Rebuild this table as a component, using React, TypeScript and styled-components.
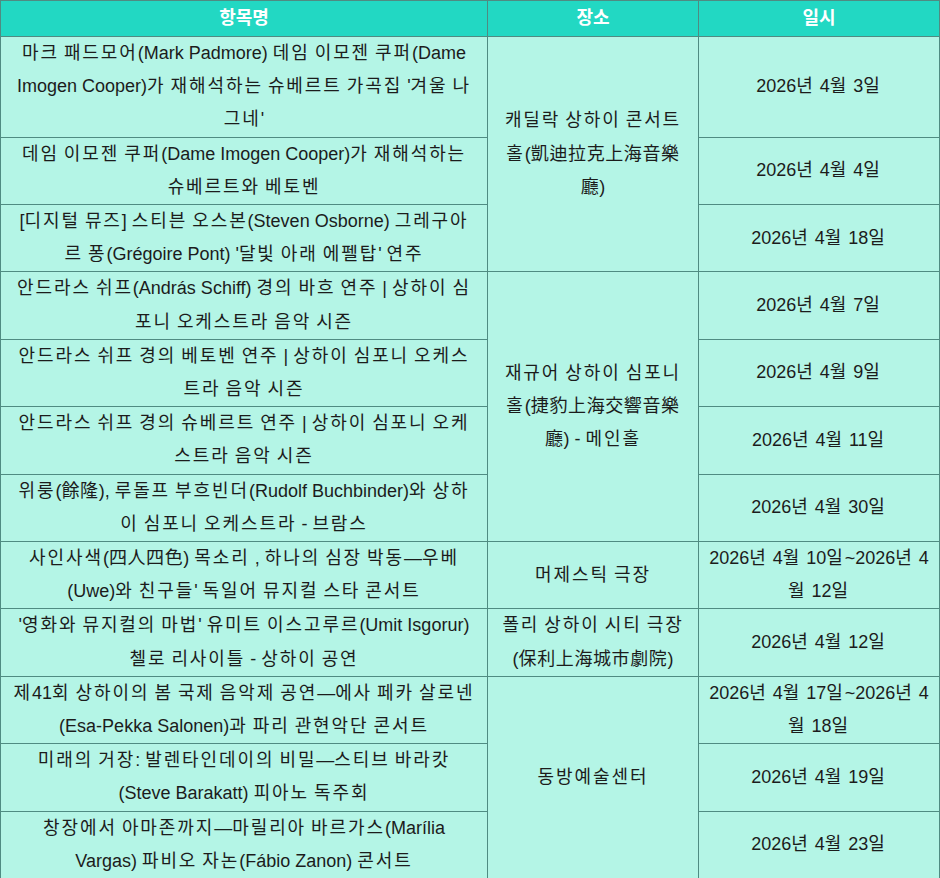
import React from "react";
import styled, { createGlobalStyle } from "styled-components";

const GlobalStyle = createGlobalStyle`
  html, body {
    margin: 0;
    padding: 0;
    background: #ffffff;
  }
  body {
    font-family: "Liberation Sans", "Noto Sans CJK KR", Arial, sans-serif;
  }
`;

const Table = styled.table`
  width: 939px;
  border-collapse: collapse;
  table-layout: fixed;
  font-family: "Liberation Sans", "Noto Sans CJK KR", Arial, sans-serif;
  font-size: 18px;
  color: #1c1c1c;
`;

const Col = styled.col<{ $w: number }>`
  width: ${(p) => p.$w}px;
`;

const HeadCell = styled.th`
  box-sizing: border-box;
  background: #22d8c3;
  color: #ffffff;
  font-weight: bold;
  text-align: center;
  line-height: 33px;
  padding: 1px 8px;
  border: 1px solid #4f8b82;
`;

const Cell = styled.td<{ $pad?: number }>`
  box-sizing: border-box;
  background: #b4f5e6;
  text-align: center;
  vertical-align: middle;
  line-height: 33.2px;
  padding: 0 ${(p) => p.$pad ?? 10}px;
  border: 1px solid #4f8b82;
`;

const Script = styled.span<{ $space: number }>`
  letter-spacing: ${(p) => p.$space}px;
`;

const CJK = /([\uAC00-\uD7A3]+|[\u4E00-\u9FFF]+)/;
const HANGUL = /[\uAC00-\uD7A3]/;
const HAN = /[\u4E00-\u9FFF]/;

function Text({ value }: { value: string }) {
  return (
    <>
      {value.split(CJK).map((part, i) => {
        if (HANGUL.test(part)) return <Script key={i} $space={1.9}>{part}</Script>;
        if (HAN.test(part)) return <Script key={i} $space={0.6}>{part}</Script>;
        return <React.Fragment key={i}>{part}</React.Fragment>;
      })}
    </>
  );
}

type Row = { title: string; date: string; venue?: string; span?: number };

const rows: Row[] = [
  {
    title:
      "마크 패드모어(Mark Padmore) 데임 이모젠 쿠퍼(Dame Imogen Cooper)가 재해석하는 슈베르트 가곡집 '겨울 나그네'",
    date: "2026년 4월 3일",
    venue: "캐딜락 상하이 콘서트홀(凱迪拉克上海音樂廳)",
    span: 3,
  },
  {
    title: "데임 이모젠 쿠퍼(Dame Imogen Cooper)가 재해석하는 슈베르트와 베토벤",
    date: "2026년 4월 4일",
  },
  {
    title:
      "[디지털 뮤즈] 스티븐 오스본(Steven Osborne) 그레구아르 퐁(Grégoire Pont) '달빛 아래 에펠탑' 연주",
    date: "2026년 4월 18일",
  },
  {
    title: "안드라스 쉬프(András Schiff) 경의 바흐 연주 | 상하이 심포니 오케스트라 음악 시즌",
    date: "2026년 4월 7일",
    venue: "재규어 상하이 심포니홀(捷豹上海交響音樂廳) - 메인홀",
    span: 4,
  },
  {
    title: "안드라스 쉬프 경의 베토벤 연주 | 상하이 심포니 오케스트라 음악 시즌",
    date: "2026년 4월 9일",
  },
  {
    title: "안드라스 쉬프 경의 슈베르트 연주 | 상하이 심포니 오케스트라 음악 시즌",
    date: "2026년 4월 11일",
  },
  {
    title: "위룽(餘隆), 루돌프 부흐빈더(Rudolf Buchbinder)와 상하이 심포니 오케스트라 - 브람스",
    date: "2026년 4월 30일",
  },
  {
    title: "사인사색(四人四色) 목소리 , 하나의 심장 박동—우베(Uwe)와 친구들' 독일어 뮤지컬 스타 콘서트",
    date: "2026년 4월 10일~2026년 4월 12일",
    venue: "머제스틱 극장",
    span: 1,
  },
  {
    title: "'영화와 뮤지컬의 마법' 유미트 이스고루르(Umit Isgorur) 첼로 리사이틀 - 상하이 공연",
    date: "2026년 4월 12일",
    venue: "폴리 상하이 시티 극장(保利上海城市劇院)",
    span: 1,
  },
  {
    title:
      "제41회 상하이의 봄 국제 음악제 공연—에사 페카 살로넨(Esa-Pekka Salonen)과 파리 관현악단 콘서트",
    date: "2026년 4월 17일~2026년 4월 18일",
    venue: "동방예술센터",
    span: 3,
  },
  {
    title: "미래의 거장: 발렌타인데이의 비밀—스티브 바라캇(Steve Barakatt) 피아노 독주회",
    date: "2026년 4월 19일",
  },
  {
    title: "창장에서 아마존까지—마릴리아 바르가스(Marília Vargas) 파비오 자논(Fábio Zanon) 콘서트",
    date: "2026년 4월 23일",
  },
];

export default function App() {
  return (
    <>
      <GlobalStyle />
      <Table>
        <colgroup>
          <Col $w={487} />
          <Col $w={211} />
          <Col $w={241} />
        </colgroup>
        <thead>
          <tr>
            <HeadCell>항목명</HeadCell>
            <HeadCell>장소</HeadCell>
            <HeadCell>일시</HeadCell>
          </tr>
        </thead>
        <tbody>
          {rows.map((r, i) => (
            <tr key={i}>
              <Cell $pad={12}>
                <Text value={r.title} />
              </Cell>
              {r.venue && (
                <Cell $pad={10} rowSpan={r.span}>
                  <Text value={r.venue} />
                </Cell>
              )}
              <Cell $pad={6}>
                <Text value={r.date} />
              </Cell>
            </tr>
          ))}
        </tbody>
      </Table>
    </>
  );
}
